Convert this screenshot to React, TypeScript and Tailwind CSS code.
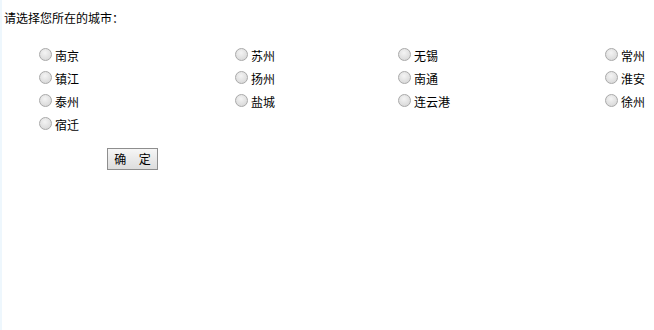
const cities = [
  ['南京', '苏州', '无锡', '常州'],
  ['镇江', '扬州', '南通', '淮安'],
  ['泰州', '盐城', '连云港', '徐州'],
  ['宿迁'],
]

function Radio({ label }: { label: string }) {
  return (
    <label className="flex h-[23px] items-start">
      <span className="mt-[3px] h-[13px] w-[13px] shrink-0 rounded-full border border-[#a9a9a9] bg-[radial-gradient(circle_at_45%_35%,#f4f4f4,#d2d2d2)]" />
      <span className="ml-[3px] mt-[4px] leading-[14px]">{label}</span>
    </label>
  )
}

export default function App() {
  return (
    <div className="flex h-[330px] w-[654px] bg-white text-[12px] text-black [font-family:'Noto_Sans_CJK_SC',sans-serif]">
      <div className="w-[2px] shrink-0 bg-[#eef7fd]" />
      <div className="flex-1 pl-[2px] pt-[10px]">
        <p className="leading-[16px]">请选择您所在的城市：</p>
        <div className="ml-[35px] mt-[19px] grid grid-cols-[196px_163px_207px_1fr]">
          {cities.flat().map((c) => (
            <Radio key={c} label={c} />
          ))}
        </div>
        <button className="ml-[103px] mt-[11px] h-[22px] w-[51px] border border-[#8e8e8e] bg-gradient-to-b from-[#f6f6f6] to-[#dddddd] text-[12px] leading-none tracking-[5px] pl-[5px]">
          确 定
        </button>
      </div>
    </div>
  )
}
